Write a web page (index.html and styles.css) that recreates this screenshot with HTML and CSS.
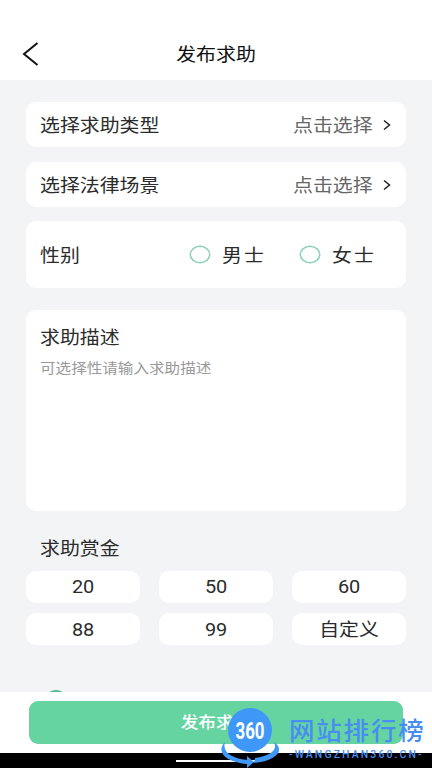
FILE: index.html
```html
<!DOCTYPE html>
<html lang="zh-CN">
<head>
<meta charset="utf-8">
<title>发布求助</title>
<link rel="stylesheet" href="styles.css">
</head>
<body>
<div class="screen">
  <header class="header">
    <svg class="back" width="18" height="26" viewBox="0 0 18 26"><path d="M15.500 2 2 13l13.500 11" fill="none" stroke="#111" stroke-width="2"/></svg>
    <h1 class="title"><span class="wide center">发布求助</span></h1>
  </header>
  <main class="main">
    <section class="card row">
      <span class="wide">选择求助类型</span>
      <span class="wide value">点击选择</span>
      <svg class="chevron" width="9" height="12" viewBox="0 0 9 12"><path d="M1 1.500 6.500 6 1 10.500" fill="none" stroke="#222" stroke-width="1.500"/></svg>
    </section>
    <section class="card row">
      <span class="wide">选择法律场景</span>
      <span class="wide value">点击选择</span>
      <svg class="chevron" width="9" height="12" viewBox="0 0 9 12"><path d="M1 1.500 6.500 6 1 10.500" fill="none" stroke="#222" stroke-width="1.500"/></svg>
    </section>
    <section class="card gender">
      <span class="wide gender-label">性别</span>
      <label class="option"><i class="radio"></i><span class="wide spaced">男士</span></label>
      <label class="option"><i class="radio"></i><span class="wide spaced">女士</span></label>
    </section>
    <section class="card describe">
      <div class="describe-title"><span class="wide">求助描述</span></div>
      <div class="placeholder"><span class="wide">可选择性请输入求助描述</span></div>
    </section>
    <div class="bounty-title"><span class="wide">求助赏金</span></div>
    <div class="chips">
      <div class="chip"><span class="wide center">20</span></div>
      <div class="chip"><span class="wide center">50</span></div>
      <div class="chip"><span class="wide center">60</span></div>
      <div class="chip"><span class="wide center">88</span></div>
      <div class="chip"><span class="wide center">99</span></div>
      <div class="chip"><span class="wide center">自定义</span></div>
    </div>
    <div class="clipped"><i class="agree"></i></div>
  </main>
  <footer class="footer">
    <div class="submit"><span class="wide center">发布求助</span></div>
  </footer>
  <div class="navbar"><i class="home-line"></i></div>
  <div class="watermark">
    <svg class="globe" width="60" height="62" viewBox="0 0 60 62">
      <circle cx="30" cy="24" r="22" fill="#3f98f8"/>
      <path d="M5 36C-4 45 4 56 27 58v4l7-6-7-6v4C11 52 2 46 5 36Z" fill="#3f98f8"/>
      <path d="M54 36c4 8-4 14-19 16l-1 5c22-2 32-13 20-21Z" fill="#3f98f8"/>
      <text x="30" y="33" text-anchor="middle" textLength="29" lengthAdjust="spacingAndGlyphs" class="globe-text">360</text>
    </svg>
    <div class="brand">
      <div class="brand-name">网站排行榜</div>
      <div class="brand-url">-WANGZHAN360.CN-</div>
    </div>
  </div>
</div>
</body>
</html>
```
FILE: styles.css
```css
* { box-sizing: border-box; }
body { margin: 0; }
.screen {
  position: relative;
  display: flex;
  flex-direction: column;
  width: 432px;
  height: 768px;
  overflow: hidden;
  background: #fff;
  color: #2b2b2b;
  font: 18px/24px Roboto, "Noto Sans CJK SC", sans-serif;
}
.wide {
  display: inline-block;
  transform: scaleX(1.105);
  transform-origin: left center;
  white-space: nowrap;
}
.center { transform-origin: center; }
.header {
  display: grid;
  grid-template-columns: 60px 1fr 60px;
  align-items: center;
  height: 80px;
  padding-top: 28px;
}
.back { margin-left: 22px; }
.title { margin: 0; padding-top: 2px; color: #111; font-size: 18px; font-weight: 400; text-align: center; }
.main {
  display: flex;
  flex-direction: column;
  height: 612px;
  padding: 22px 26px 0;
  background: #f3f4f6;
}
.card { flex: none; border-radius: 10px; background: #fff; }
.row {
  display: flex;
  align-items: center;
  height: 45px;
  margin-bottom: 15px;
  padding: 2px 14px 0;
}
.row + .row { margin-bottom: 14px; }
.value { margin-left: auto; margin-right: 18px; color: #666; }
.chevron { flex: none; margin-bottom: 2px; }
.gender {
  display: flex;
  align-items: center;
  height: 67px;
  padding: 2px 0 0 14px;
}
.gender-label { flex: none; width: 150px; }
.option { display: flex; flex: none; align-items: center; width: 110px; }
.radio {
  flex: none;
  width: 20px;
  height: 17px;
  margin: 0 12px 2px 0;
  border: 1.5px solid #7bcbad;
  box-shadow: 0 0 0 0.5px #7bcbad;
  border-radius: 50%;
}
.spaced { letter-spacing: 2px; }
.describe { height: 201px; margin-top: 22px; padding: 16px 14px; }
.placeholder { margin-top: 6px; color: #999; font-size: 14.1px; }
.bounty-title { margin: 26px 14px 10px; }
.chips {
  display: grid;
  grid-template-columns: repeat(3, 1fr);
  grid-auto-rows: 32px;
  gap: 10px 19px;
}
.chip {
  display: flex;
  align-items: center;
  justify-content: center;
  border-radius: 10px;
  background: #fff;
}
.chip:nth-child(n + 4) { padding-top: 1px; }
.clipped { height: 2px; margin: auto 0 0 20px; overflow: hidden; }
.agree {
  display: block;
  width: 20px;
  height: 17px;
  border: 2px solid #55b995;
  border-radius: 50%;
}
.footer { height: 61px; padding: 9px 29px; }
.submit {
  display: flex;
  align-items: center;
  justify-content: center;
  height: 43px;
  padding-top: 1px;
  border-radius: 9px;
  background: #65d4a1;
  color: #fff;
  font-size: 16px;
  font-weight: 500;
}
.navbar { height: 15px; padding-top: 7px; background: #000; }
.home-line { display: block; width: 80px; height: 2px; margin: 0 auto; background: #fff; }
.watermark {
  position: absolute;
  left: 220px;
  top: 706px;
  display: flex;
  color: #488df0;
}
.globe { flex: none; }
.globe-text { fill: #fff; font: 700 24px Roboto, sans-serif; }
.brand { padding: 8px 0 0 9px; }
.brand-name {
  height: 33px;
  font: 500 25.5px/30px "Noto Sans CJK SC", sans-serif;
  letter-spacing: 1.8px;
  white-space: nowrap;
}
.brand-url {
  font: 500 10.5px/15px Roboto, sans-serif;
  letter-spacing: 2.1px;
  white-space: nowrap;
}
```
